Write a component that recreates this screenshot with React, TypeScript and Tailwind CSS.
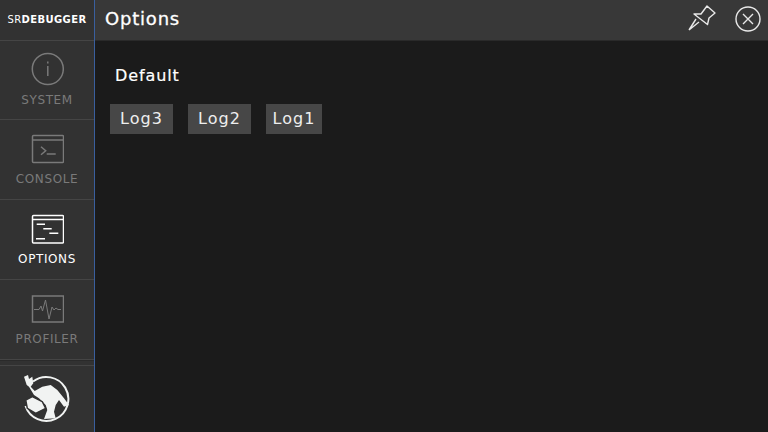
import React from "react";

function NavItem({ label, active, first, children }: { label: string; active?: boolean; first?: boolean; children: React.ReactNode }) {
  return (
    <div className={`flex shrink-0 flex-col items-center border-b border-[#454545] ${first ? "h-[79px] pt-[11px]" : "h-[80px] pt-[12px]"} ${active ? "text-white" : "text-[#7a7a7a]"}`}>
      <svg width="34" height="34" viewBox="0 0 34 34" fill="none" stroke="currentColor" strokeWidth="1.5" className="shrink-0">
        {children}
      </svg>
      <span className={`whitespace-nowrap text-[12px] leading-[14px] tracking-[0.6px] ${first ? "mt-[7px]" : "mt-[6px]"}`}>{label}</span>
    </div>
  );
}

function LogButton({ label, w }: { label: string; w: string }) {
  return (
    <div className={`flex h-[30px] items-center justify-center bg-[#474747] text-[16px] tracking-[1px] text-[#eeeeee] ${w}`}>
      {label}
    </div>
  );
}

export default function App() {
  return (
    <div className="flex h-[432px] w-[768px] overflow-hidden bg-[#1b1b1b] font-['DejaVu_Sans']">
      <aside className="flex h-full w-[95px] shrink-0 flex-col border-r border-[#3a5f9e] bg-[#323232]">
        <div className="flex h-[41px] shrink-0 items-center justify-center border-b border-[#454545] pb-[2px] text-[10px] tracking-[0.4px] text-white">
          <span className="font-normal">SR</span>
          <span className="font-bold">DEBUGGER</span>
        </div>
        <NavItem label="SYSTEM" first>
          <circle cx="17.8" cy="17" r="15.5" />
          <path d="M17.8 14v10" />
          <path d="M17.8 9.500v2" />
        </NavItem>
        <NavItem label="CONSOLE">
          <rect x="2.500" y="3.500" width="31" height="27" rx="1" />
          <path d="M2.500 8h31" />
          <path d="M11 14.700l4.700 4-4.700 4" />
          <path d="M16.700 22h9" />
        </NavItem>
        <NavItem label="OPTIONS" active>
          <rect x="2.500" y="3.500" width="31" height="27.500" rx="1" />
          <path d="M2.500 7.500h31" />
          <path d="M6.700 12.300h8.300M13.300 16.700h8.400M19.300 21.300h9M6 26.700h9" />
        </NavItem>
        <NavItem label="PROFILER">
          <rect x="2.500" y="4" width="31" height="26" />
          <path d="M4 17.500h5l2-3.500 1.500 5 3-11 3.500 19 3-12 2 3 2-2 2 1.500h3" strokeWidth="1" />
        </NavItem>
        <div className="h-[6px] shrink-0 border-y border-t-[#2a2a2a] border-b-[#454545]" />
        <div className="flex flex-1 items-start justify-center pt-[9px]">
          <svg width="50" height="50" viewBox="0 0 50 50" className="shrink-0">
            <path d="M11 6.500A22 22 0 1 1 3.500 31" fill="none" stroke="#f1f3f2" strokeWidth="2" />
            <path d="M2 1.700L6 0l1 4 3.300-2.300 1 6.600-2.600 3.400L12.700 16l7.600-4.300L28.700 10l6.600 5L42 23.300 47 30l-5 1.700L37 25l-3.300 5L32 36.700l1.700 6.600L22 44l3.300-9-1.600-5L17 23.300 12 20 7 11.700 4.700 10z" fill="#f1f3f2" />
            <path d="M3.700 25l6.600-3.300 10 5 3.400 6.600-10 5-8.400-5z" fill="#f1f3f2" stroke="#323232" strokeWidth="1.5" />
          </svg>
        </div>
      </aside>
      <main className="flex min-w-0 flex-1 flex-col">
        <header className="flex h-[41px] shrink-0 items-center justify-between border-b border-[#2a2a2a] bg-[#383838] pb-[2px] pl-[10px] pr-[7px]">
          <span className="text-[18px] leading-none tracking-[0.8px] text-white [-webkit-text-stroke:0.3px_white]">Options</span>
          <div className="flex items-center gap-[19px]">
            <svg width="28" height="28" viewBox="0 0 28 28" fill="none" stroke="#e8e8e8" strokeWidth="1.4" strokeLinejoin="round">
              <path d="M1 25L8 14M1 25L11 17" />
              <path d="M6 9L13 9 19 1 27 8 21 13 19.500 19.500z" />
            </svg>
            <svg width="26" height="26" viewBox="0 0 26 26" fill="none" stroke="#e8e8e8" strokeWidth="1.4">
              <circle cx="13" cy="13" r="12" />
              <path d="M8 8l10 10M18 8L8 18" />
            </svg>
          </div>
        </header>
        <section className="px-[15px] pt-[25px]">
          <div className="pl-[5px] text-[16px] leading-[20px] tracking-[0.9px] text-white [-webkit-text-stroke:0.2px_white]">Default</div>
          <div className="mt-[18px] flex gap-[15px]">
            <LogButton label="Log3" w="w-[63px]" />
            <LogButton label="Log2" w="w-[63px]" />
            <LogButton label="Log1" w="w-[56px]" />
          </div>
        </section>
      </main>
    </div>
  );
}
